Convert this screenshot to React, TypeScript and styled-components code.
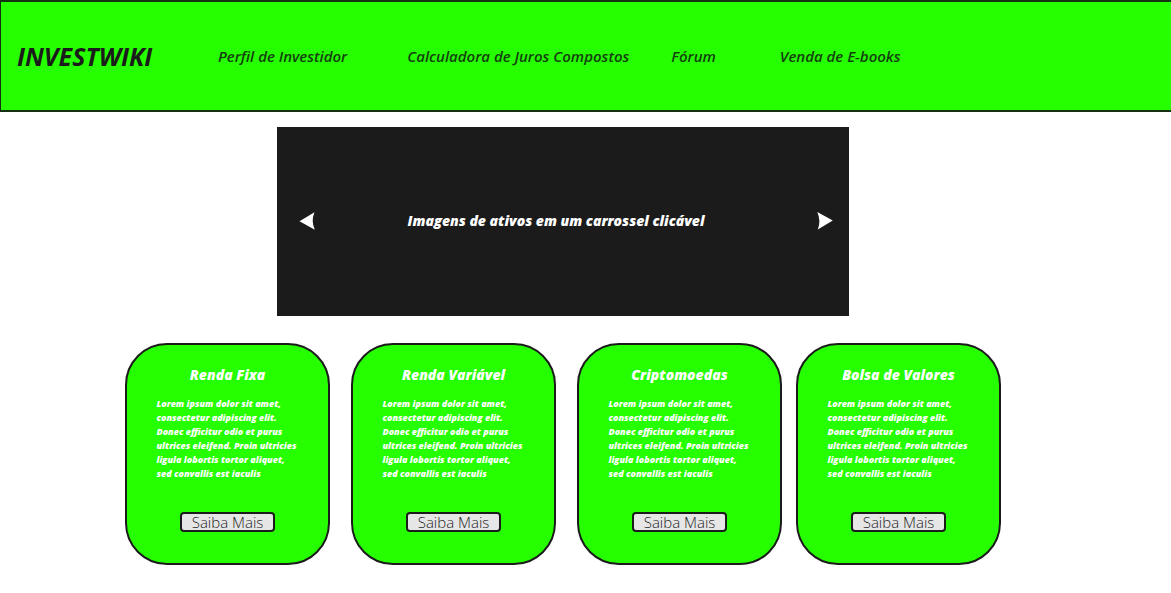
import React from "react";
import styled, { createGlobalStyle } from "styled-components";

const GlobalStyle = createGlobalStyle`
  * { box-sizing: border-box; }
  body {
    margin: 0;
    background: #ffffff;
    font-family: "Open Sans", "Noto Sans", sans-serif;
  }
`;

const green = "#26ff00";
const ink = "#1b1b1b";

const Header = styled.header`
  display: flex;
  align-items: center;
  height: 112px;
  padding-left: 16px;
  background: ${green};
  border: 2px solid #14310f;
  border-right: 0;
  border-left-width: 1px;
`;

const Brand = styled.a`
  width: 201px;
  color: ${ink};
  font-size: 25px;
  line-height: 32px;
  font-style: italic;
  font-weight: 700;
  text-decoration: none;
`;

const Nav = styled.nav`
  display: flex;
  align-items: center;
`;

const NavLink = styled.a<{ $gap: number }>`
  margin-right: ${(p) => p.$gap}px;
  color: #14410e;
  font-size: 15px;
  line-height: 20px;
  font-style: italic;
  font-weight: 600;
  white-space: nowrap;
  text-decoration: none;
`;

const Main = styled.main`
  display: flex;
  flex-direction: column;
  align-items: center;
  gap: 27px;
  padding: 15px 45px 28px 0;
`;

const Carousel = styled.section`
  display: flex;
  align-items: center;
  justify-content: space-between;
  width: 100%;
  max-width: 572px;
  height: 189px;
  padding: 0 16px 2px 22px;
  background: ${ink};
`;

const ArrowButton = styled.button`
  display: flex;
  padding: 0;
  border: 0;
  background: none;
  cursor: pointer;
`;

const CarouselText = styled.p`
  margin: 0 20px 0 0;
  color: #ffffff;
  font-size: 14px;
  line-height: 20px;
  font-style: italic;
  font-weight: 800;
`;

const Cards = styled.section`
  display: flex;
`;

const Card = styled.article<{ $gap: number }>`
  display: flex;
  flex-direction: column;
  align-items: center;
  width: 205px;
  height: 222px;
  margin-right: ${(p) => p.$gap}px;
  padding-top: 20px;
  background: ${green};
  border: 2px solid ${ink};
  border-radius: 42px;
`;

const CardTitle = styled.h2`
  margin: 0 0 12px;
  color: #ffffff;
  font-size: 14px;
  line-height: 20px;
  font-style: italic;
  font-weight: 800;
`;

const CardText = styled.p`
  width: 142px;
  margin: 0 0 31px;
  color: #ffffff;
  font-size: 9px;
  line-height: 14px;
  font-style: italic;
  font-weight: 800;
  white-space: pre;
`;

const MoreButton = styled.button`
  width: 95px;
  height: 20px;
  padding: 0;
  color: ${ink};
  background: #e6e6e6;
  border: 2px solid ${ink};
  border-radius: 4px;
  font-family: inherit;
  font-size: 15px;
  line-height: 16px;
  font-weight: 300;
  cursor: pointer;
`;

const links = [
  { label: "Perfil de Investidor", gap: 60 },
  { label: "Calculadora de Juros Compostos", gap: 42 },
  { label: "Fórum", gap: 64 },
  { label: "Venda de E-books", gap: 0 },
];

const cards = [
  { title: "Renda Fixa", gap: 21 },
  { title: "Renda Variável", gap: 21 },
  { title: "Criptomoedas", gap: 14 },
  { title: "Bolsa de Valores", gap: 0 },
];

const lorem = [
  "Lorem ipsum dolor sit amet,",
  "consectetur adipiscing elit.",
  "Donec efficitur odio et purus",
  "ultrices eleifend. Proin ultricies",
  "ligula lobortis tortor aliquet,",
  "sed convallis est iaculis",
].join("\n");

export default function App() {
  return (
    <>
      <GlobalStyle />
      <Header>
        <Brand href="#">INVESTWIKI</Brand>
        <Nav>
          {links.map((l) => (
            <NavLink key={l.label} href="#" $gap={l.gap}>
              {l.label}
            </NavLink>
          ))}
        </Nav>
      </Header>
      <Main>
        <Carousel>
          <ArrowButton aria-label="Anterior">
            <svg width="16" height="18" viewBox="0 0 16 18" fill="#ffffff">
              <path d="M0.5 9.2 L15.5 0.3 Q11.8 9 15.8 17.8 Z" />
            </svg>
          </ArrowButton>
          <CarouselText>Imagens de ativos em um carrossel clicável</CarouselText>
          <ArrowButton aria-label="Próximo">
            <svg width="16" height="18" viewBox="0 0 16 18" fill="#ffffff">
              <path d="M15.8 8.5 L0.3 0 Q4.2 9 0.8 17.4 Z" />
            </svg>
          </ArrowButton>
        </Carousel>
        <Cards>
          {cards.map((c) => (
            <Card key={c.title} $gap={c.gap}>
              <CardTitle>{c.title}</CardTitle>
              <CardText>{lorem}</CardText>
              <MoreButton>Saiba Mais</MoreButton>
            </Card>
          ))}
        </Cards>
      </Main>
    </>
  );
}
